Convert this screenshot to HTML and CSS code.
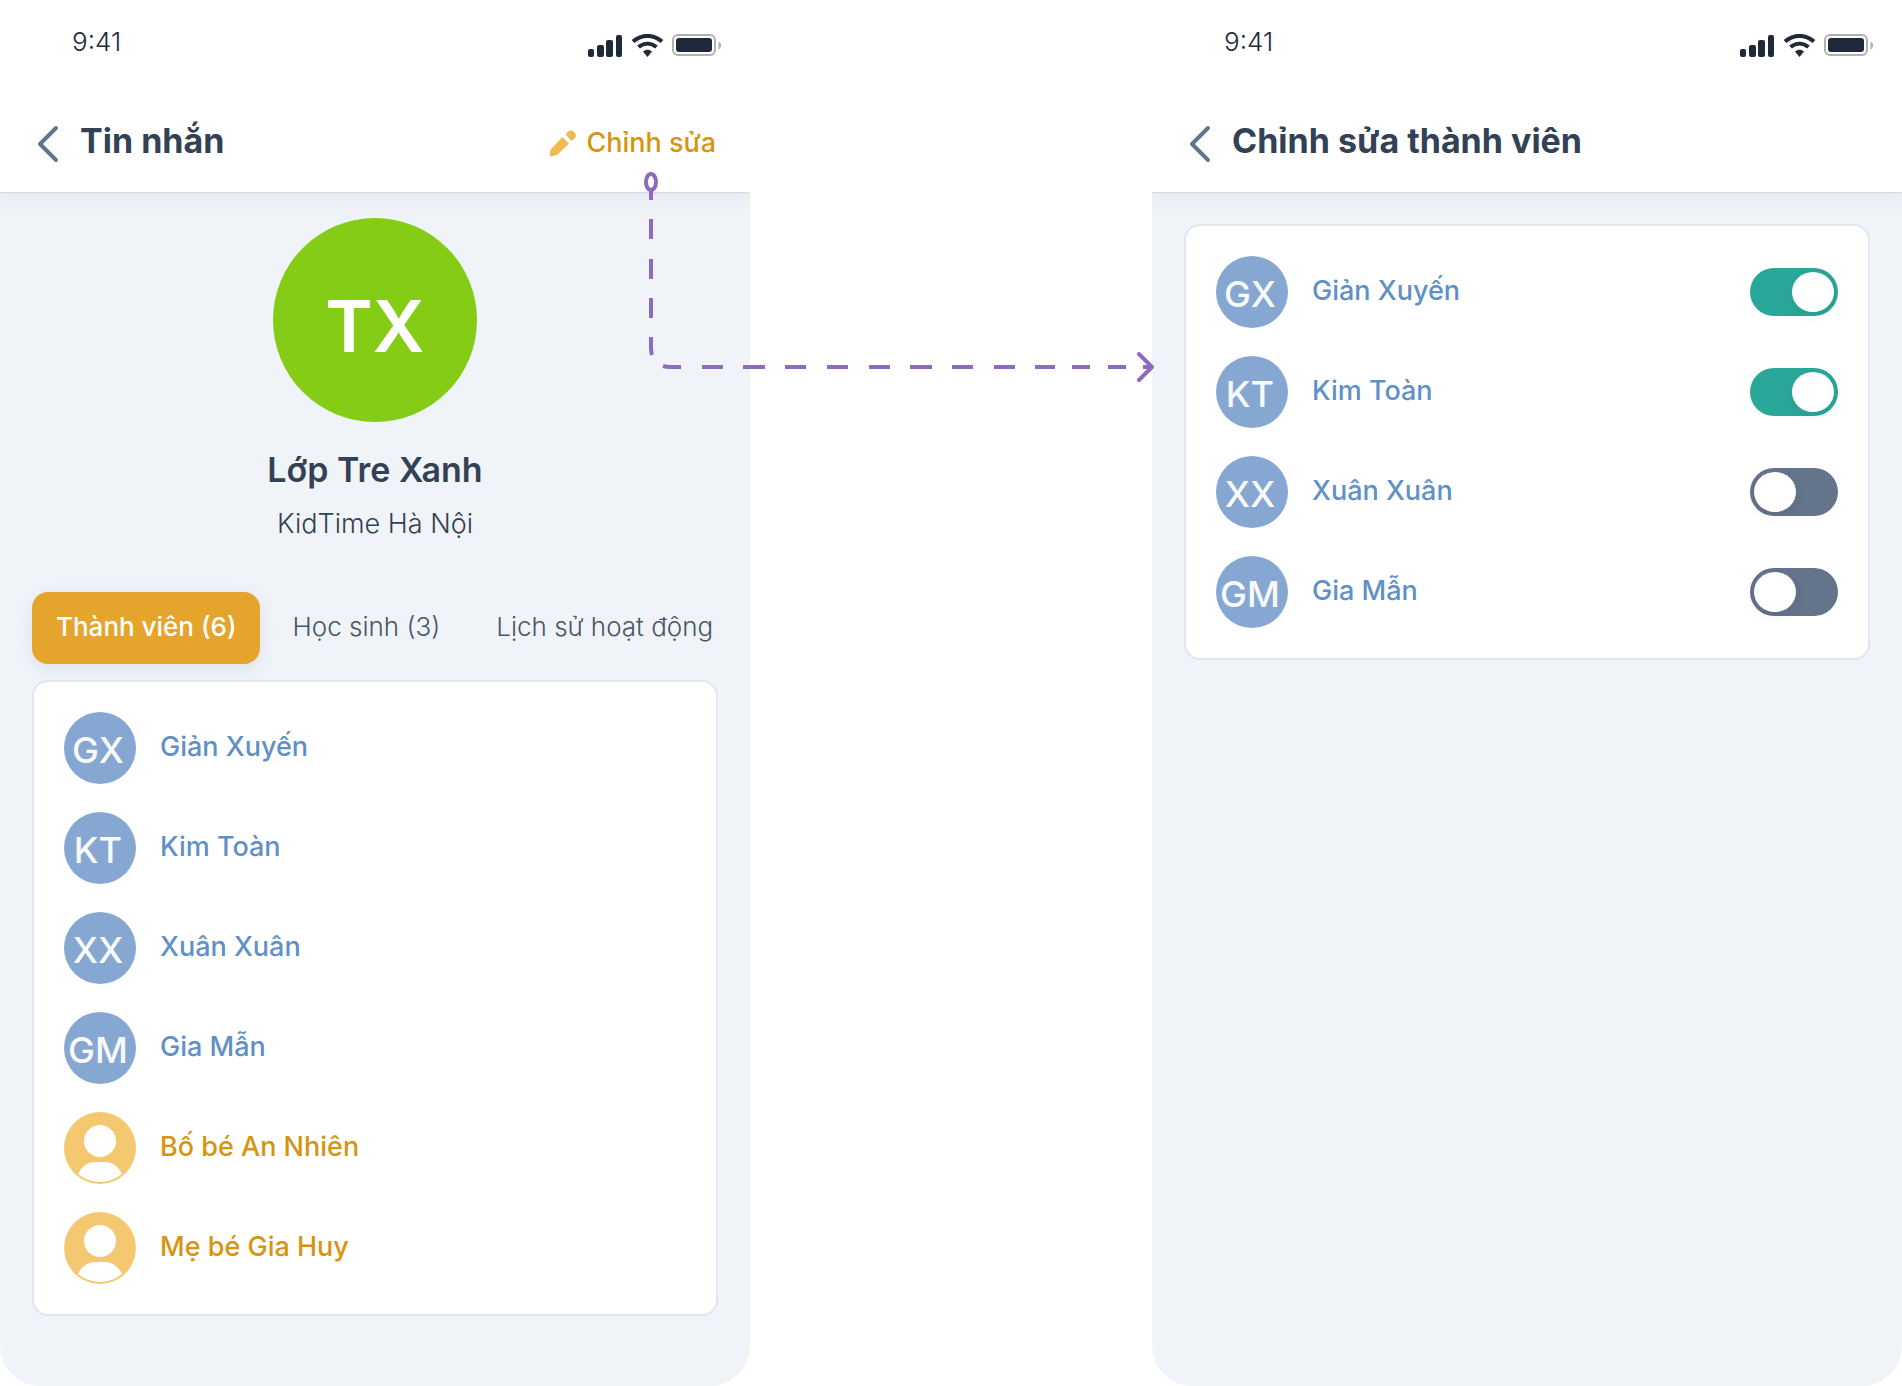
FILE: index.html
```
<!DOCTYPE html>
<html lang="vi">
<head>
    <meta charset="UTF-8">
    <meta name="viewport" content="width=device-width, initial-scale=1.0">
    <title>Tin nhắn</title>
    <link rel="stylesheet" href="styles.css">
</head>
<body>

    <!-- Общие иконки -->
    <svg class="sprite" aria-hidden="true">
        <symbol id="icon-status" viewBox="0 0 134 24">
            <rect x="0" y="15" width="6" height="8" rx="2"/>
            <rect x="9" y="11" width="7" height="12" rx="2"/>
            <rect x="18" y="6" width="7" height="17" rx="2"/>
            <rect x="28" y="1" width="6" height="22" rx="2"/>
            <path d="M45 7.500C53.500 0 65.500 0 74 7.500" fill="none" stroke="currentColor" stroke-width="4"/>
            <path d="M50.500 13C56 8.500 63 8.500 68.500 13" fill="none" stroke="currentColor" stroke-width="4"/>
            <path d="M55 17.500C57.800 15.200 61.200 15.200 64 17.500L59.500 23Z"/>
            <rect x="85" y="1" width="42" height="20" rx="5" fill="none" stroke="#aeb2b8" stroke-width="2"/>
            <rect x="88" y="4" width="36" height="14" rx="3"/>
            <path d="M130.500 7.500C134 9 134 13.500 130.500 15.500Z" fill="#aeb2b8"/>
        </symbol>
        <symbol id="icon-back" viewBox="0 0 24 40">
            <path d="M20 4L4 20L20 36" fill="none" stroke="currentColor" stroke-width="4" stroke-linecap="round" stroke-linejoin="round"/>
        </symbol>
        <symbol id="icon-pencil" viewBox="0 0 28 28">
            <path d="M13.500 8L20 14.500L8.500 25.500Q7.500 26.500 6 26.600L1.500 27.400Q.6 27.400.7 26.500L1.300 22Q1.500 20.500 2.500 19.500Z"/>
            <path d="M16.500 5.500L18.500 3Q21.500-.3 25 2.800Q28.700 6.500 25.500 9.500L22.500 12Z"/>
        </symbol>
        <symbol id="icon-person" viewBox="0 0 72 72">
            <circle cx="36" cy="29" r="16"/>
            <path d="M14 62Q20 50 31 50H41Q52 50 58 62Q48 70 36 70Q24 70 14 62Z"/>
        </symbol>
    </svg>

    <main class="flow">

        <!-- Экран группы -->
        <section class="screen">
            <header class="header">
                <div class="status-bar">
                    <span class="time">9:41</span>
                    <svg class="status-icons"><use href="#icon-status"/></svg>
                </div>
                <div class="nav">
                    <button type="button" class="back" aria-label="Quay lại">
                        <svg class="icon-back"><use href="#icon-back"/></svg>
                    </button>
                    <h1>Tin nhắn</h1>
                    <a href="#edit" class="edit-link">
                        <svg class="icon-pencil"><use href="#icon-pencil"/></svg>
                        Chỉnh sửa
                    </a>
                </div>
            </header>

            <div class="profile">
                <div class="profile-avatar">TX</div>
                <h2>Lớp Tre Xanh</h2>
                <p>KidTime Hà Nội</p>
            </div>

            <div class="tabs">
                <button type="button" class="tab active">Thành viên (6)</button>
                <button type="button" class="tab">Học sinh (3)</button>
                <button type="button" class="tab">Lịch sử hoạt động</button>
            </div>

            <ul class="card">
                <li class="member"><span class="avatar">GX</span><span class="name">Giản Xuyến</span></li>
                <li class="member"><span class="avatar">KT</span><span class="name">Kim Toàn</span></li>
                <li class="member"><span class="avatar">XX</span><span class="name">Xuân Xuân</span></li>
                <li class="member"><span class="avatar">GM</span><span class="name">Gia Mẫn</span></li>
                <li class="member parent">
                    <svg class="avatar"><use href="#icon-person"/></svg>
                    <span class="name">Bố bé An Nhiên</span>
                </li>
                <li class="member parent">
                    <svg class="avatar"><use href="#icon-person"/></svg>
                    <span class="name">Mẹ bé Gia Huy</span>
                </li>
            </ul>
        </section>

        <!-- Стрелка перехода между экранами -->
        <div class="connector">
            <svg class="arrow" viewBox="0 0 516 216" aria-hidden="true">
                <ellipse cx="11" cy="14" rx="5" ry="8"/>
                <path d="M11 22V32M11 51V71M11 91V111M11 130V150M11 169V180Q11 184 12 187"/>
                <path d="M23 198Q26 199 30 199H41M62 199H83M103 199H125M145 199H166M187 199H208M229 199H250M270 199H292M312 199H333M354 199H375M395 199H415M432 199H450M468 199H486M503 199H512"/>
                <path d="M499 186L512 199L499 212" stroke-linecap="round" stroke-linejoin="round"/>
            </svg>
        </div>

        <!-- Экран редактирования участников -->
        <section class="screen" id="edit">
            <header class="header">
                <div class="status-bar">
                    <span class="time">9:41</span>
                    <svg class="status-icons"><use href="#icon-status"/></svg>
                </div>
                <div class="nav">
                    <button type="button" class="back" aria-label="Quay lại">
                        <svg class="icon-back"><use href="#icon-back"/></svg>
                    </button>
                    <h1>Chỉnh sửa thành viên</h1>
                </div>
            </header>

            <ul class="card card-edit">
                <li class="member">
                    <span class="avatar">GX</span>
                    <label class="name" for="member-gx">Giản Xuyến</label>
                    <input type="checkbox" class="toggle" id="member-gx" checked>
                </li>
                <li class="member">
                    <span class="avatar">KT</span>
                    <label class="name" for="member-kt">Kim Toàn</label>
                    <input type="checkbox" class="toggle" id="member-kt" checked>
                </li>
                <li class="member">
                    <span class="avatar">XX</span>
                    <label class="name" for="member-xx">Xuân Xuân</label>
                    <input type="checkbox" class="toggle" id="member-xx">
                </li>
                <li class="member">
                    <span class="avatar">GM</span>
                    <label class="name" for="member-gm">Gia Mẫn</label>
                    <input type="checkbox" class="toggle" id="member-gm">
                </li>
            </ul>
        </section>

    </main>

</body>
</html>
```
FILE: styles.css
```
* {
    box-sizing: border-box;
}
body {
    font-family: Inter, "Open Sans", sans-serif;
    font-size: 27px;
    line-height: 36px;
    margin: 0;
    background-color: #fff;
    color: #334155;
}
h1, h2, p, ul {
    margin: 0;
    padding: 0;
}
button {
    font: inherit;
    color: inherit;
    background: none;
    border: none;
    padding: 0;
    cursor: pointer;
}
svg {
    display: block;
    flex-shrink: 0;
    fill: currentColor;
}
.sprite {
    display: none;
}
.flow {
    display: grid;
    grid-template-columns: 750fr 402fr 750fr;
    min-height: 100vh;
}
.screen {
    min-width: 0;
    background-color: #f0f4f9;
    border-radius: 0 0 40px 40px;
    overflow: hidden;
}

/* Шапка */
.header {
    background-color: #fff;
    padding-bottom: 20px;
    box-shadow: 0 1px 1px rgba(51, 65, 85, 0.1), 0 4px 20px rgba(51, 65, 85, 0.08);
}
.status-bar {
    display: flex;
    justify-content: space-between;
    padding: 24px 28px 0 72px;
    height: 96px;
    color: #1e293b;
}
.time {
    font-size: 26px;
    font-weight: 300;
}
.status-icons {
    width: 134px;
    height: 24px;
    margin-top: 10px;
}
.nav {
    display: flex;
    align-items: center;
    height: 76px;
    padding: 20px 34px 0 36px;
}
.nav h1 {
    font-size: 34px;
    font-weight: 700;
    padding: 0 0 6px 20px;
    white-space: nowrap;
}
.back {
    color: #64748b;
}
.icon-back {
    width: 24px;
    height: 40px;
}
.edit-link {
    display: flex;
    align-items: center;
    gap: 10px;
    margin-left: auto;
    padding-bottom: 2px;
    color: #d69411;
    font-weight: 500;
    text-decoration: none;
    white-space: nowrap;
}
.icon-pencil {
    width: 28px;
    height: 28px;
    color: #f1ba50;
}

/* Профиль группы */
.profile {
    display: flex;
    flex-direction: column;
    align-items: center;
    padding: 26px 32px 0;
}
.profile-avatar {
    display: flex;
    align-items: center;
    justify-content: center;
    width: 204px;
    height: 204px;
    padding-top: 12px;
    border-radius: 50%;
    background-color: #84cc16;
    color: #fff;
    font-size: 72px;
    font-weight: 600;
}
.profile h2 {
    margin-top: 24px;
    font-size: 34px;
    line-height: 48px;
    font-weight: 600;
}
.profile p {
    margin-top: 12px;
    font-weight: 300;
}

/* Вкладки */
.tabs {
    display: flex;
    gap: 8px;
    margin-top: 50px;
    padding-left: 32px;
}
.tab {
    height: 72px;
    padding: 0 24px 2px;
    border-radius: 16px;
    color: #475569;
    font-size: 26px;
    font-weight: 300;
    white-space: nowrap;
}
.tab.active {
    background-color: #e5a52d;
    color: #fff;
    font-weight: 500;
    box-shadow: 0 4px 16px rgba(51, 65, 85, 0.1);
}

/* Список участников */
.card {
    display: flex;
    flex-direction: column;
    gap: 28px;
    margin: 16px 32px 70px;
    padding: 30px;
    background-color: #fff;
    border: 2px solid #e0e7f0;
    border-radius: 16px;
    list-style: none;
}
.card-edit {
    margin-top: 32px;
}
.member {
    display: flex;
    align-items: center;
    gap: 24px;
}
.avatar {
    display: flex;
    align-items: center;
    justify-content: center;
    flex-shrink: 0;
    width: 72px;
    height: 72px;
    padding: 4px 4px 0 0;
    border-radius: 50%;
    background-color: #86a7d1;
    color: #f8fafc;
    font-size: 36px;
    font-weight: 500;
}
.name {
    flex: 1;
    padding-bottom: 2px;
    color: #5f90c7;
    font-weight: 500;
}
.parent .avatar {
    padding: 0;
    background-color: #f4c871;
    color: #fff;
}
.parent .name {
    color: #d69411;
}

/* Переключатель */
.toggle {
    appearance: none;
    display: flex;
    width: 88px;
    height: 48px;
    margin: 0;
    padding: 4px;
    border-radius: 24px;
    background-color: #64748b;
    cursor: pointer;
}
.toggle::before {
    content: "";
    width: 42px;
    height: 40px;
    border-radius: 50%;
    background-color: #fff;
    box-shadow: 0 4px 12px rgba(0, 0, 0, 0.08);
}
.toggle:checked {
    justify-content: flex-end;
    background-color: #2aa798;
}

/* Стрелка лежит поверх обоих экранов */
.connector {
    position: relative;
}
.arrow {
    position: absolute;
    top: 168px;
    right: -4px;
    width: 516px;
    fill: none;
    stroke: #8f6bbf;
    stroke-width: 4;
}
```
